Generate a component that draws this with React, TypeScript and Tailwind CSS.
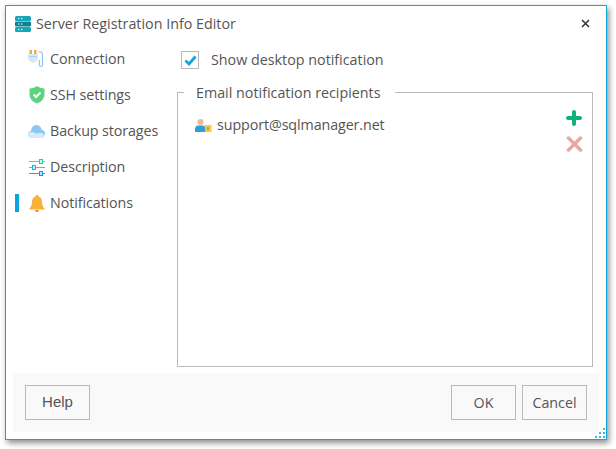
const font = "font-['Open_Sans','Noto_Sans',sans-serif]";

const PlugIcon = () => (
  <svg width="17" height="18" viewBox="0 0 17 18" fill="none">
    <rect x="1.500" y="0" width="2.500" height="4" fill="#f5a83c" />
    <rect x="6" y="0" width="2.500" height="4" fill="#f5a83c" />
    <path d="M0 4h10v2.500C10 10 7.500 13 5 13S0 10 0 6.500z" fill="#d5e9f8" />
    <path d="M1 6.500h8" stroke="#a8d4f2" />
    <path d="M10.500 1.500c3 0 4 1.500 4 3.500v10c0 2-3 2-3 0v-5" stroke="#8cc4ee" strokeWidth="1.200" />
  </svg>
);

const ShieldIcon = () => (
  <svg width="16" height="18" viewBox="0 0 16 18">
    <path d="M8 0c2 1.500 4.500 2.500 7.500 2.500V8c0 4.500-3 8-7.500 9.500C3.500 16 .5 12.500.5 8V2.500C3.500 2.500 6 1.500 8 0z" fill="#5fd27f" />
    <path d="M4.500 8.500l2.500 2.500 4.500-4.500" stroke="#fff" strokeWidth="2" fill="none" />
  </svg>
);

const CloudIcon = () => (
  <svg width="17" height="13" viewBox="0 0 17 13">
    <path d="M4 13C1.500 13 0 11.300 0 9.300 0 7.500 1.300 6.200 3 6 3.600 2.500 5.300 0 8.500 0c3 0 4.800 2.200 5.300 4.800 1.900.3 3.200 2 3.200 4 0 2.300-1.700 4.200-4 4.200z" fill="#8cc8f2" />
    <path d="M0 9.300C0 11.300 1.500 13 4 13h9c1.800 0 3.200-1.100 3.800-2.700C14 7 11 7 8.500 9 6 7 3 6.500.5 7.500.2 8.100 0 8.700 0 9.300z" fill="#d6ebfa" />
  </svg>
);

const SlidersIcon = () => (
  <svg width="16" height="17" viewBox="0 0 16 17" fill="none">
    <path d="M0 2.500h16" stroke="#1df0b0" />
    <rect x="10.500" y="0.500" width="3" height="4" fill="#c8fbea" stroke="#14d89c" />
    <path d="M0 8.500h16" stroke="#1cd0f4" />
    <rect x="3.500" y="6.500" width="3" height="4" fill="#c8f2fc" stroke="#12b8e8" />
    <path d="M0 14.500h16" stroke="#1aa8fa" />
    <rect x="10.500" y="12.500" width="3" height="4" fill="#c4e6fd" stroke="#1296f0" />
  </svg>
);

const BellIcon = () => (
  <svg width="16" height="17" viewBox="0 0 16 17">
    <path d="M8 0c1 0 1.500.6 1.500 1.500C12 2.300 13 4.500 13 7c0 3 1.200 5 2.500 6.500v1H.5v-1C1.800 12 3 10 3 7c0-2.500 1-4.700 3.500-5.500C6.500.6 7 0 8 0z" fill="#fbb03b" />
    <path d="M6 15h4c0 1.200-.8 2-2 2s-2-.8-2-2z" fill="#f08c1e" />
  </svg>
);

const ServerIcon = () => (
  <svg width="16" height="16" viewBox="0 0 16 16">
    <rect x="0" y="0" width="16" height="5" rx="1.500" fill="#17a5b8" />
    <rect x="0" y="5.500" width="16" height="5" rx="1" fill="#0f7f96" />
    <rect x="0" y="11" width="16" height="5" rx="1.500" fill="#17a5b8" />
    <rect x="3" y="1.900" width="1.500" height="1.200" fill="#bdeef2" />
    <rect x="6" y="1.900" width="1.500" height="1.200" fill="#bdeef2" />
    <rect x="3" y="7.400" width="1.500" height="1.200" fill="#bdeef2" />
    <rect x="6" y="7.400" width="1.500" height="1.200" fill="#bdeef2" />
    <rect x="3" y="12.900" width="1.500" height="1.200" fill="#bdeef2" />
    <rect x="6" y="12.900" width="1.500" height="1.200" fill="#bdeef2" />
  </svg>
);

const UsersIcon = () => (
  <svg width="17" height="13" viewBox="0 0 17 13">
    <circle cx="5.500" cy="3" r="3" fill="#f7b58c" />
    <path d="M0 13V10c0-2 1.500-3.500 3-3.500h5c1.500 0 2.500 1.500 2.500 3.500v3z" fill="#2f9fd8" />
    <rect x="10" y="6" width="6.500" height="7" fill="#f7c948" />
    <rect x="12" y="8" width="2" height="3" fill="#d99a1e" />
  </svg>
);

const navItems = [
  { label: "Connection", icon: <PlugIcon /> },
  { label: "SSH settings", icon: <ShieldIcon /> },
  { label: "Backup storages", icon: <CloudIcon /> },
  { label: "Description", icon: <SlidersIcon /> },
  { label: "Notifications", icon: <BellIcon />, active: true },
];

const Btn = ({ children, arial }: { children: string; arial?: boolean }) => (
  <button
    className={`w-[65px] h-[35px] border border-[#b9b9b9] text-[#555] bg-[#f9f9f9] ${
      arial ? "font-['Liberation_Sans',sans-serif] text-[15px]" : "text-[14.3px]"
    }`}
  >
    {children}
  </button>
);

export default function App() {
  return (
    <div className={`w-[616px] h-[449px] bg-white pl-[5px] pt-[5px] overflow-hidden ${font}`}>
      <div className="w-[602px] h-[435px] border border-[#12a5d8] bg-white shadow-[2px_3px_6px_rgba(0,0,0,0.45)] flex flex-col text-[14.3px] text-[#555] relative">
        <div className="h-[35px] flex items-center pl-[9px] pr-[16px] shrink-0">
          <ServerIcon />
          <span className="ml-[5px]">Server Registration Info Editor</span>
          <svg className="ml-auto" width="9" height="9" viewBox="0 0 9 9">
            <path d="M1 1l7 7M8 1l-7 7" stroke="#333" strokeWidth="1.500" />
          </svg>
        </div>

        <div className="flex flex-1 min-h-0">
          <nav className="w-[171px] shrink-0 pl-[9px] flex flex-col">
            {navItems.map((item) => (
              <div key={item.label} className="h-[36px] flex items-center">
                <span className={`w-[4px] h-[18px] ${item.active ? "bg-[#0aa5dc]" : ""}`} />
                <span className="w-[17px] ml-[9px] flex justify-center">{item.icon}</span>
                <span className="ml-[5px] tracking-[-0.1px] whitespace-nowrap">{item.label}</span>
              </div>
            ))}
          </nav>

          <div className="flex-1 flex flex-col pr-[13px]">
            <label className="h-[36px] mt-[1px] flex items-center shrink-0 pl-[4px]">
              <span className="w-[18px] h-[18px] border border-[#b9b9b9] flex items-center justify-center">
                <svg width="13" height="11" viewBox="0 0 13 11" fill="none">
                  <path d="M1.500 5.500l3.500 3.500 6.500-7.500" stroke="#12a5d8" strokeWidth="2.800" />
                </svg>
              </span>
              <span className="ml-[12px]">Show desktop notification</span>
            </label>

            <fieldset className="flex-1 border border-[#b9b9b9] mt-[5px] mb-[6px] pl-[17px] pr-[9px] pt-[14px] min-h-0">
              <legend className="ml-[-11px] px-[12px] pr-[14px] leading-[19px]">Email notification recipients</legend>
              <div className="flex items-start justify-between">
                <div className="flex items-center h-[20px] mt-[-1px]">
                  <UsersIcon />
                  <span className="ml-[5px] tracking-[-0.1px]">support@sqlmanager.net</span>
                </div>
                <div className="flex flex-col gap-[10px] mt-[-6px]">
                  <svg width="16" height="16" viewBox="0 0 16 16">
                    <path d="M8 2v12M2 8h12" stroke="#10b27c" strokeWidth="4" strokeLinecap="round" />
                  </svg>
                  <svg width="17" height="16" viewBox="0 0 17 16">
                    <path d="M2.500 2l12 12M14.500 2l-12 12" stroke="#eaa6a6" strokeWidth="3.500" strokeLinecap="round" />
                  </svg>
                </div>
              </div>
            </fieldset>
          </div>
        </div>

        <div className="h-[59px] mx-[7px] mb-[7px] bg-[#f9f9f9] flex items-center px-[12px] gap-[6px] shrink-0">
          <Btn arial>Help</Btn>
          <div className="flex-1" />
          <Btn>OK</Btn>
          <Btn>Cancel</Btn>
        </div>

        <svg className="absolute right-[0px] bottom-[0px]" width="11" height="11" viewBox="0 0 11 11" fill="#3db4e4">
          <rect x="8" y="0" width="2" height="2" />
          <rect x="4" y="4" width="2" height="2" />
          <rect x="8" y="4" width="2" height="2" />
          <rect x="0" y="8" width="2" height="2" />
          <rect x="4" y="8" width="2" height="2" />
          <rect x="8" y="8" width="2" height="2" />
        </svg>
      </div>
    </div>
  );
}
